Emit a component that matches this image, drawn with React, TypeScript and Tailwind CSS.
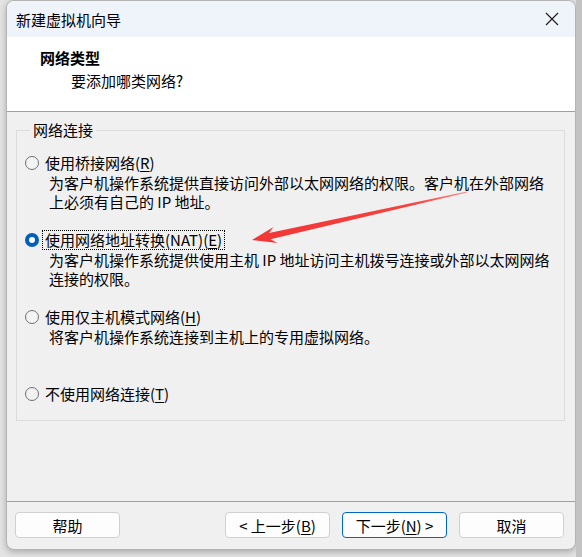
import React from 'react';

const FONT = "font-['Noto_Sans_CJK_SC','Microsoft_YaHei',sans-serif]";

const Radio: React.FC<{ checked?: boolean }> = ({ checked }) =>
  checked ? (
    <span className="w-[14px] h-[14px] rounded-full bg-[#005fb8] flex items-center justify-center shrink-0">
      <span className="w-[6px] h-[6px] rounded-full bg-white" />
    </span>
  ) : (
    <span className="w-[14px] h-[14px] rounded-full border border-[#707070] bg-[#f3f3f3] shrink-0" />
  );

const Key: React.FC<{ k: string }> = ({ k }) => (
  <span className="underline underline-offset-[2px] decoration-1">{k}</span>
);

const Option: React.FC<{
  label: React.ReactNode;
  checked?: boolean;
  focused?: boolean;
  desc?: React.ReactNode;
  className?: string;
}> = ({ label, checked, focused, desc, className = '' }) => (
  <div className={className}>
    <div className="flex items-center h-[20px] gap-[3px]">
      <Radio checked={checked} />
      <span
        className={`px-[2px] leading-[18px] border whitespace-nowrap ${
          focused ? 'border-dotted border-black' : 'border-transparent'
        }`}
      >
        {label}
      </span>
    </div>
    {desc && <div className="pl-[24px] leading-[19px] whitespace-nowrap">{desc}</div>}
  </div>
);

const Button: React.FC<{ children: React.ReactNode; primary?: boolean; className?: string }> = ({
  children,
  primary,
  className = '',
}) => (
  <div
    className={`w-[105px] h-[26px] rounded-[4px] bg-[#fdfdfd] border flex items-center justify-center leading-none ${
      primary ? 'border-[#0067c0]' : 'border-[#d0d0d0]'
    } ${className}`}
  >
    {children}
  </div>
);

const App: React.FC = () => {
  return (
    <div className={`relative w-[582px] h-[557px] overflow-hidden bg-[#e3e3e3] flex ${FONT} text-[15px] text-black`}>
      <div className="w-[6px] shrink-0" />

      {/* Wizard window */}
      <div className="w-[570px] h-[550px] shrink-0 flex flex-col rounded-[8px] overflow-hidden border border-[#b4b4b4] bg-[#f0f0f0] shadow-[0_2px_6px_rgba(0,0,0,0.25)]">
        {/* Title bar */}
        <div className="h-[36px] shrink-0 bg-[#eef4f9] flex items-center justify-between pl-[9px] pr-[15px]">
          <span className="leading-none">新建虚拟机向导</span>
          <svg width="14" height="14" viewBox="0 0 14 14" className="mr-[1px]">
            <path d="M1 1 L13 13 M13 1 L1 13" stroke="#1a1a1a" strokeWidth="1.1" />
          </svg>
        </div>

        {/* Header */}
        <div className="h-[75px] shrink-0 bg-white border-b border-[#a0a0a0] pt-[9px] pl-[33px] leading-[23px]">
          <div className="font-bold">网络类型</div>
          <div className="pl-[31px]">要添加哪类网络?</div>
        </div>

        {/* Body */}
        <div className="flex-1 flex flex-col pt-[8px]">
          <fieldset className="mx-[9px] mr-[10px] border border-[#dcdcdc] pl-[8px] pt-[13px] pb-[16px]">
            <legend className="ml-[5px] px-[3px] leading-[20px]">网络连接</legend>

            <Option
              label={<>使用桥接网络(<Key k="R" />)</>}
              desc={
                <>
                  为客户机操作系统提供直接访问外部以太网网络的权限。客户机在外部网络
                  <br />
                  上必须有自己的 IP 地址。
                </>
              }
            />
            <Option
              className="mt-[19px]"
              checked
              focused
              label={<>使用网络地址转换(NAT)(<Key k="E" />)</>}
              desc={
                <>
                  为客户机操作系统提供使用主机 IP 地址访问主机拨号连接或外部以太网网络
                  <br />
                  连接的权限。
                </>
              }
            />
            <Option
              className="mt-[19px]"
              label={<>使用仅主机模式网络(<Key k="H" />)</>}
              desc={<>将客户机操作系统连接到主机上的专用虚拟网络。</>}
            />
            <Option className="mt-[38px]" label={<>不使用网络连接(<Key k="T" />)</>} />
          </fieldset>
        </div>

        {/* Footer */}
        <div className="h-[48px] shrink-0 border-t border-[#a0a0a0] flex items-start justify-between pt-[10px] pl-[8px] pr-[11px]">
          <Button>帮助</Button>
          <div className="flex gap-[12px]">
            <Button>
              &lt; 上一步(<Key k="B" />)
            </Button>
            <Button primary>
              下一步(<Key k="N" />) &gt;
            </Button>
            <Button>取消</Button>
          </div>
        </div>
      </div>

      <div className="flex-1 bg-[#c3c3c3]" />

      {/* Red annotation arrow */}
      <svg className="absolute inset-0 pointer-events-none" width="582" height="557" viewBox="0 0 582 557">
        <defs>
          <linearGradient id="arrowFade" x1="467" y1="192" x2="252" y2="240" gradientUnits="userSpaceOnUse">
            <stop offset="0" stopColor="#ff8a8a" />
            <stop offset="0.25" stopColor="#f5423f" />
            <stop offset="1" stopColor="#f23636" />
          </linearGradient>
        </defs>
        <polygon
          points="252,240 277.5,243 270.5,239.2 467,192.6 466.8,191.6 269,233 273.5,227"
          fill="url(#arrowFade)"
        />
      </svg>
    </div>
  );
};

export default App;
